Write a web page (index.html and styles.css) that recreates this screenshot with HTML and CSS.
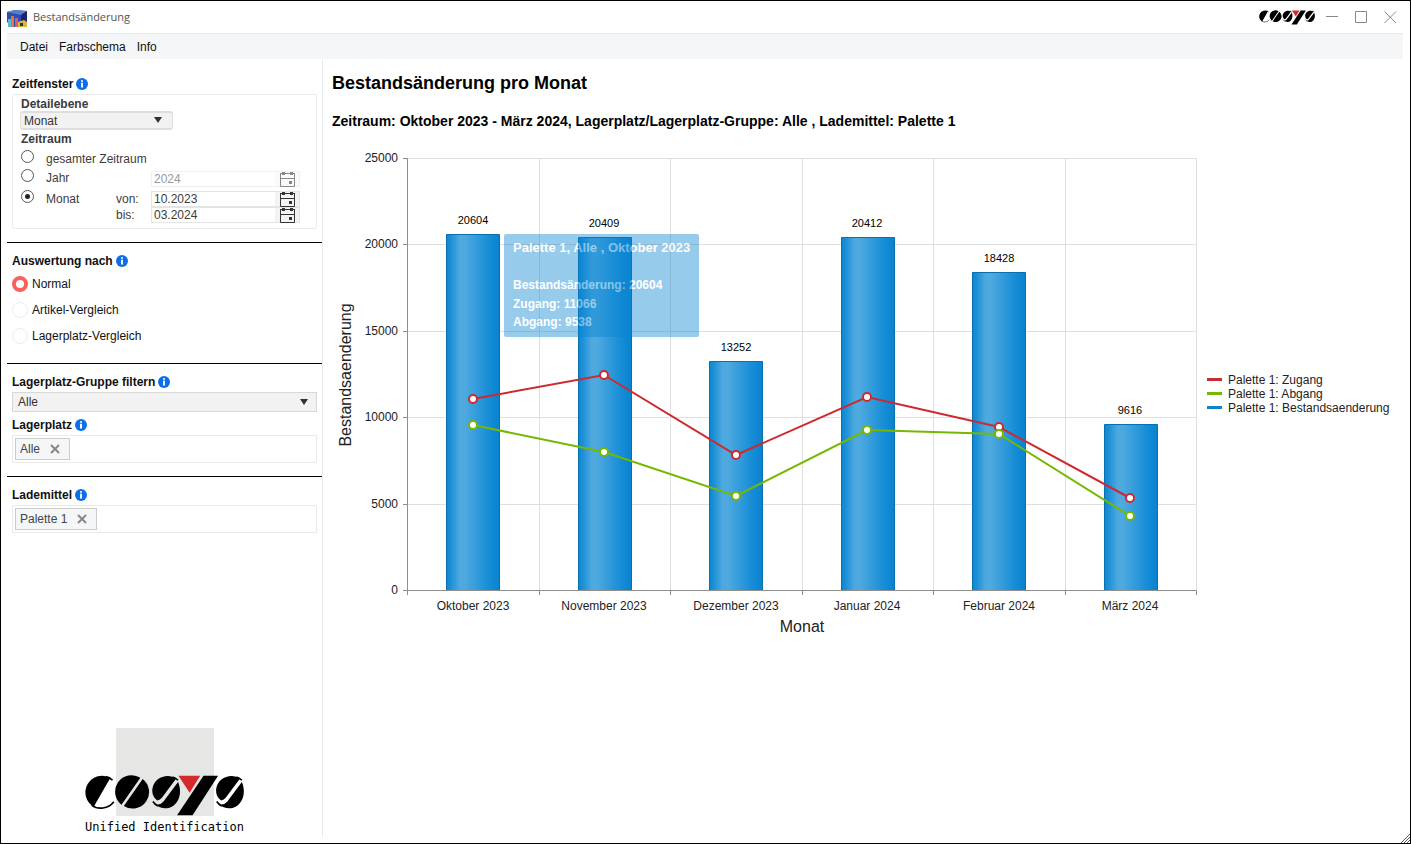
FILE: index.html
```html
<!DOCTYPE html>
<html lang="de">
<head>
<meta charset="utf-8">
<title>Bestandsänderung</title>
<link rel="stylesheet" href="styles.css">
</head>
<body>
<svg class="defs" aria-hidden="true">
  <symbol id="wordmark" viewBox="45 181 482 124">
    <path d="M122 190 A50 50 0 1 0 72 277 Z"/>
    <path d="M66 272 C84 287 116 284 133 262 M108 186 Q120 188 129 197" fill="none" stroke="#000" stroke-width="5"/>
    <path d="M213 189 A50 50 0 0 0 156 271 Z M220 193 A50 50 0 0 1 163 275 Z"/>
    <path d="M321 192 C296 174 252 188 249 226 C249 240 253 248 264 258 Q273 257 278 250 Z M327 202 C338 226 335 262 308 277 C290 286 272 281 259 272 L266 270 Q276 270 283 261 Z"/>
    <path d="M310 187 Q319 189 327 197 M251 261 Q257 270 266 275" fill="none" stroke="#000" stroke-width="5"/>
    <path class="wm-accent" d="M328 183H394L362 235Z"/>
    <path d="M404 183H448L371 303H324Z"/>
    <path d="M514 192 C489 174 445 188 442 226 C442 240 446 248 457 258 Q466 257 471 250 Z M520 202 C531 226 528 262 501 277 C483 286 465 281 452 272 L459 270 Q469 270 476 261 Z"/>
    <path d="M503 187 Q512 189 520 197 M444 261 Q450 270 459 275" fill="none" stroke="#000" stroke-width="5"/>
  </symbol>
  <symbol id="info" viewBox="0 0 12 12">
    <circle cx="6" cy="6" r="6" fill="#0a6fe8"/>
    <path d="M5 2.2h2v1.6H5zM5 4.8h2v4.8H5z" fill="#fff"/>
  </symbol>
  <symbol id="calendar" viewBox="0 0 15 15">
    <path d="M.5 1.500V14.500H14.500V1.500M.5 6.500H14.500M0 1.500H15" fill="none" stroke="currentColor"/>
    <path d="M2 0h3v3H2zM10 0h3v3h-3zM9 9h3v3H9z" fill="currentColor"/>
  </symbol>
  <symbol id="cross" viewBox="0 0 10 10">
    <path d="M1 1L9 9M9 1L1 9" fill="none" stroke="currentColor" stroke-width="2"/>
  </symbol>
</svg>

<div class="window">
  <header class="titlebar">
    <svg class="app-icon" viewBox="0 0 20 18" aria-hidden="true">
      <path d="M0 2L8 0L20 1V17H5L0 12Z" fill="#2b4fae"/>
      <path d="M0 2L8 0L20 1L14 5Z" fill="#5a80cc"/>
      <path d="M14 5L20 1V17H14Z" fill="#1d2570"/>
      <path d="M1 9h3v8H1z" fill="#58b8d8"/>
      <path d="M4 6h3v11H4z" fill="#e8743c"/>
      <path d="M8 8h3v9H8z" fill="#d85a7a"/>
      <path d="M11 12L17 10L20 12V17H11Z" fill="#d6b63e"/>
      <path d="M13 13h3v3h-3z" fill="#333"/>
    </svg>
    <h1 class="app-title">Bestandsänderung</h1>
    <svg class="brand-small" role="img" aria-label="COSYS"><use href="#wordmark"/></svg>
    <div class="window-controls">
      <button type="button" aria-label="Minimieren"><svg viewBox="0 0 13 13"><path d="M0 5.500H12"/></svg></button>
      <button type="button" aria-label="Maximieren"><svg viewBox="0 0 13 13"><path d="M.5.500H11.500V11.500H.5Z"/></svg></button>
      <button type="button" aria-label="Schließen"><svg viewBox="0 0 13 13"><path d="M.5.500L12 12M12 .5L.5 12"/></svg></button>
    </div>
  </header>

  <nav class="menubar">
    <button type="button">Datei</button>
    <button type="button">Farbschema</button>
    <button type="button">Info</button>
  </nav>

  <div class="workspace">
    <aside class="sidebar">
      <section class="panel panel-first">
        <h2 class="panel-label">Zeitfenster <svg class="info"><use href="#info"/></svg></h2>
        <div class="period-box">
          <label class="sub-label" for="detail">Detailebene</label>
          <div class="select select-small">
            <select id="detail"><option>Monat</option></select>
          </div>
          <h3 class="sub-label sub-label-tall">Zeitraum</h3>
          <div class="period-grid">
            <input class="radio" type="radio" name="period" id="p-all">
            <label class="wide" for="p-all">gesamter Zeitraum</label>

            <input class="radio" type="radio" name="period" id="p-year">
            <label for="p-year">Jahr</label>
            <span></span>
            <div class="date disabled">
              <input type="text" value="2024" aria-label="Jahr" disabled>
              <button type="button" aria-label="Jahr wählen" disabled><svg><use href="#calendar"/></svg></button>
            </div>

            <input class="radio" type="radio" name="period" id="p-month" checked>
            <label for="p-month">Monat</label>
            <label for="from">von:</label>
            <div class="date">
              <input type="text" id="from" value="10.2023">
              <button type="button" aria-label="Von wählen"><svg><use href="#calendar"/></svg></button>
            </div>

            <label class="until" for="until">bis:</label>
            <div class="date">
              <input type="text" id="until" value="03.2024">
              <button type="button" aria-label="Bis wählen"><svg><use href="#calendar"/></svg></button>
            </div>
          </div>
        </div>
      </section>

      <section class="panel">
        <h2 class="panel-label">Auswertung nach <svg class="info"><use href="#info"/></svg></h2>
        <label class="choice"><input type="radio" name="mode" checked>Normal</label>
        <label class="choice"><input type="radio" name="mode">Artikel-Vergleich</label>
        <label class="choice"><input type="radio" name="mode">Lagerplatz-Vergleich</label>
      </section>

      <section class="panel">
        <label class="panel-label" for="group">Lagerplatz-Gruppe filtern <svg class="info"><use href="#info"/></svg></label>
        <div class="select">
          <select id="group"><option>Alle</option></select>
        </div>
        <h2 class="panel-label panel-label-next">Lagerplatz <svg class="info"><use href="#info"/></svg></h2>
        <div class="tags">
          <span class="tag">Alle <button type="button" aria-label="Alle entfernen"><svg><use href="#cross"/></svg></button></span>
        </div>
      </section>

      <section class="panel">
        <h2 class="panel-label">Lademittel <svg class="info"><use href="#info"/></svg></h2>
        <div class="tags">
          <span class="tag">Palette 1 <button type="button" aria-label="Palette 1 entfernen"><svg><use href="#cross"/></svg></button></span>
        </div>
      </section>

      <div class="brand">
        <div class="brand-block">
          <svg role="img" aria-label="COSYS"><use href="#wordmark"/></svg>
        </div>
        <p>Unified Identification</p>
      </div>
    </aside>

    <main class="report">
      <h2 class="report-title">Bestandsänderung pro Monat</h2>
      <p class="report-sub">Zeitraum: Oktober 2023 - März 2024, Lagerplatz/Lagerplatz-Gruppe: Alle , Lademittel: Palette 1</p>
      <svg class="chart" viewBox="332 144 1071 500" role="img" aria-label="Bestandsänderung pro Monat">
        <defs>
          <linearGradient id="bar">
            <stop offset="0" stop-color="#0a87d3"/>
            <stop offset=".08" stop-color="#1c90d7"/>
            <stop offset=".25" stop-color="#4ea9df"/>
            <stop offset=".35" stop-color="#4ea9df"/>
            <stop offset=".82" stop-color="#148cd6"/>
            <stop offset="1" stop-color="#0983cf"/>
          </linearGradient>
        </defs>
        <path class="grid" d="M408 158.500H1196M408 244.500H1196M408 331.500H1196M408 417.500H1196M408 504.500H1196M539.500 158V590M670.500 158V590M802.500 158V590M933.500 158V590M1065.500 158V590M1196.500 158V590"/>
        <path class="axis" d="M407.500 158V595M403 590.500H1196.500V595M403 158.500H407M403 244.500H407M403 331.500H407M403 417.500H407M403 504.500H407M539.500 591V595M670.500 591V595M802.500 591V595M933.500 591V595M1065.500 591V595"/>
        <g class="bars">
          <path d="M446.500 590V234.500H499.500V590"/>
          <path d="M578.500 590V237.500H631.500V590"/>
          <path d="M709.500 590V361.500H762.500V590"/>
          <path d="M841.500 590V237.500H894.500V590"/>
          <path d="M972.500 590V272.500H1025.500V590"/>
          <path d="M1104.500 590V424.500H1157.500V590"/>
        </g>
        <g class="values">
          <text x="473" y="224">20604</text>
          <text x="604" y="227">20409</text>
          <text x="736" y="351">13252</text>
          <text x="867" y="227">20412</text>
          <text x="999" y="262">18428</text>
          <text x="1130" y="414">9616</text>
        </g>
        <g class="line inflow">
          <polyline points="473,399 604,375 736,455 867,397 999,427 1130,498"/>
          <circle cx="473" cy="399" r="4"/><circle cx="604" cy="375" r="4"/><circle cx="736" cy="455" r="4"/>
          <circle cx="867" cy="397" r="4"/><circle cx="999" cy="427" r="4"/><circle cx="1130" cy="498" r="4"/>
        </g>
        <g class="line outflow">
          <polyline points="473,425 604,452 736,496 867,430 999,434 1130,516"/>
          <circle cx="473" cy="425" r="4"/><circle cx="604" cy="452" r="4"/><circle cx="736" cy="496" r="4"/>
          <circle cx="867" cy="430" r="4"/><circle cx="999" cy="434" r="4"/><circle cx="1130" cy="516" r="4"/>
        </g>
        <g class="ticks-y">
          <text x="398" y="162">25000</text>
          <text x="398" y="248">20000</text>
          <text x="398" y="335">15000</text>
          <text x="398" y="421">10000</text>
          <text x="398" y="508">5000</text>
          <text x="398" y="594">0</text>
        </g>
        <g class="ticks-x">
          <text x="473" y="610">Oktober 2023</text>
          <text x="604" y="610">November 2023</text>
          <text x="736" y="610">Dezember 2023</text>
          <text x="867" y="610">Januar 2024</text>
          <text x="999" y="610">Februar 2024</text>
          <text x="1130" y="610">März 2024</text>
        </g>
        <text class="axis-title" x="802" y="632">Monat</text>
        <text class="axis-title" transform="translate(351 375) rotate(-90)">Bestandsaenderung</text>
        <g class="legend">
          <path class="key-in" d="M1207 378h15v3h-15z"/><text x="1228" y="384">Palette 1: Zugang</text>
          <path class="key-out" d="M1207 392h15v3h-15z"/><text x="1228" y="398">Palette 1: Abgang</text>
          <path class="key-bar" d="M1207 406h15v3h-15z"/><text x="1228" y="412">Palette 1: Bestandsaenderung</text>
        </g>
        <g class="tooltip">
          <rect x="504" y="234" width="195" height="103" rx="2"/>
          <text class="tooltip-title" x="513" y="252">Palette 1, Alle , Oktober 2023</text>
          <text x="513" y="289">Bestandsänderung: 20604</text>
          <text x="513" y="308">Zugang: 11066</text>
          <text x="513" y="326">Abgang: 9538</text>
        </g>
      </svg>
    </main>
  </div>
  <svg class="grip" viewBox="0 0 9 9" aria-hidden="true"><path d="M0 9L9 0M3 9L9 3M6 9L9 6"/></svg>
</div>
</body>
</html>
```
FILE: styles.css
```css
* { box-sizing: border-box; }

body {
  margin: 0;
  background: #fff;
  color: #111;
  font: 12px/16px "Liberation Sans", Arial, sans-serif;
}

h1, h2, h3, p { margin: 0; }
button, input, select { font: inherit; color: inherit; margin: 0; }
button { padding: 0; border: 0; background: none; }

.defs { display: none; }
.wm-accent { fill: #d42a2e; }

.window {
  position: relative;
  display: flex;
  flex-direction: column;
  min-height: 100vh;
  padding: 0 7px 6px 6px;
  border: 1px solid #000;
}

/* Title bar */
.titlebar {
  display: flex;
  align-items: center;
  height: 32px;
}
.app-icon { width: 20px; height: 18px; margin-top: 4px; }
.app-title {
  flex: 1;
  margin-left: 6px;
  color: #555;
  font: 11px/16px "Open Sans", "Noto Sans", sans-serif;
}
.brand-small { width: 56px; height: 15px; }
.window-controls { display: flex; gap: 16px; margin: 0 6px 0 11px; }
.window-controls button { width: 13px; height: 13px; }
.window-controls svg {
  display: block;
  width: 13px;
  height: 13px;
  fill: none;
  stroke: #888;
}

/* Menu */
.menubar {
  display: flex;
  align-items: center;
  gap: 11px;
  height: 26px;
  padding-left: 13px;
  border-top: 1px solid #e6e9ed;
  background: #f4f6f8;
}

.workspace { display: flex; flex: 1; }

/* Sidebar */
.sidebar {
  display: flex;
  flex-direction: column;
  flex: 0 0 316px;
  border-right: 1px solid #e9ecef;
}
.panel {
  padding: 9px 5px 13px;
  border-bottom: 1px solid #000;
}
.panel-first { padding-top: 16px; }
.panel:nth-last-of-type(1) { border-bottom: 0; }
.panel-label {
  display: flex;
  align-items: center;
  gap: 3px;
  height: 18px;
  margin-bottom: 1px;
  font-size: 12px;
  font-weight: bold;
}
.panel-label-next { margin-top: 4px; }
.info { width: 12px; height: 12px; }

.period-box {
  height: 135px;
  padding: 3px 8px 5px;
  border: 1px solid #ebebeb;
  border-radius: 2px;
  color: #3c3c3c;
}
.sub-label {
  display: block;
  font-size: 12px;
  font-weight: bold;
  line-height: 13px;
}
.sub-label-tall { line-height: 19px; }

.select { position: relative; }
.select select {
  display: block;
  width: 100%;
  height: 20px;
  padding: 0 5px;
  border: 1px solid #d8d8d8;
  border-radius: 0;
  appearance: none;
  background: #f2f2f2;
  color: #333;
}
.select::after {
  content: "";
  position: absolute;
  top: 7px;
  right: 9px;
  border: 4px solid transparent;
  border-top: 6px solid #333;
  border-bottom: 0;
  pointer-events: none;
}
.select-small { width: 153px; margin-left: -1px; }
.select-small select {
  height: 19px;
  padding: 0 3px;
  border-width: 2px 1px;
  border-color: #dedede;
  border-radius: 3px;
}
.select-small::after { top: 6px; right: 11px; }

.period-grid {
  display: grid;
  grid-template-columns: 25px 70px 35px 149px;
  grid-template-rows: 19px 23px 16px 16px;
}
.period-grid .wide { grid-column: 2 / 5; }
.period-grid .until { grid-column: 3; }
.period-grid label { line-height: 20px; }
.period-grid label[for="from"], .period-grid label[for="p-month"] { line-height: 16px; }
.period-grid .until { line-height: 16px; }
.radio {
  display: grid;
  place-items: center;
  width: 13px;
  height: 13px;
  margin: 1px 0 0;
  border: 1px solid #555;
  border-radius: 50%;
  appearance: none;
}
#p-month { margin-top: -1px; }
.radio:checked::after {
  content: "";
  width: 5px;
  height: 5px;
  border-radius: 50%;
  background: #222;
}
.date {
  display: flex;
  height: 16px;
  border: 1px solid #e4e4e4;
}
.disabled { margin-top: 3px; border-color: #f0f0f0; color: #999; }
.date input {
  flex: 1;
  min-width: 0;
  padding: 0 2px;
  border: 0;
  background: none;
}
.date button { width: 24px; background: #f3f3f3; color: #333; }
.date.disabled button { background: #fafafa; color: #888; }
.date svg { display: block; width: 15px; height: 15px; margin: 0 auto; }

.choice {
  display: flex;
  align-items: center;
  gap: 4px;
  height: 26px;
}
.choice:last-child { margin-bottom: 1px; }
.choice input {
  width: 16px;
  height: 16px;
  border: 1px solid #ececec;
  border-radius: 50%;
  appearance: none;
}
.choice input:checked { border: 4px solid #f9625c; }

.tags {
  height: 28px;
  padding: 2px;
  border: 1px solid #ebebeb;
}
.tag {
  display: inline-flex;
  align-items: center;
  gap: 10px;
  height: 22px;
  padding: 0 9px 0 4px;
  border: 1px solid #ccc;
  background: #f5f6f7;
  color: #444;
}
.tag svg { display: block; width: 10px; height: 10px; color: #888; }

.brand {
  display: flex;
  flex-direction: column;
  align-items: center;
  margin-top: auto;
}
.brand-block {
  display: flex;
  justify-content: center;
  align-items: flex-end;
  width: 98px;
  height: 88px;
  background: #e6e7e4;
}
.brand-block svg { flex: none; width: 161px; height: 41px; }
.brand p {
  padding-top: 2px;
  color: #000;
  font: 12px/19px "DejaVu Sans Mono", monospace;
}

/* Report */
.report { flex: 1; min-width: 0; padding: 13px 0 0 9px; }
.report-title { color: #000; font-size: 18px; line-height: 22px; }
.report-sub {
  margin-top: 18px;
  color: #000;
  font-size: 14px;
  font-weight: bold;
  line-height: 18px;
}
.chart { display: block; width: 100%; height: auto; margin-top: 14px; }

.chart text { fill: #222; font-size: 12px; }
.grid { fill: none; stroke: #dfdfdf; }
.axis { fill: none; stroke: #8e8e8e; }
.bars path { fill: url(#bar); stroke: #0a6fae; }
.chart .values text { fill: #000; font-size: 11px; text-anchor: middle; }
.ticks-y text { text-anchor: end; }
.ticks-x text { text-anchor: middle; }
.chart .axis-title { font-size: 16px; text-anchor: middle; }
.line polyline { fill: none; stroke-width: 2; }
.line circle { fill: #fff; stroke-width: 2; }
.inflow { stroke: #cd2a2f; }
.outflow { stroke: #76b800; }
.key-in { fill: #cd2a2f; }
.key-out { fill: #76b800; }
.key-bar { fill: #0f83cb; }
.tooltip { opacity: .42; }
.tooltip rect { fill: #0a84d3; }
.chart .tooltip text { fill: #fff; font-weight: bold; }
.chart .tooltip .tooltip-title { font-size: 13px; }

.grip {
  position: absolute;
  right: 0;
  bottom: 0;
  width: 9px;
  height: 9px;
  stroke: #555;
}
```
